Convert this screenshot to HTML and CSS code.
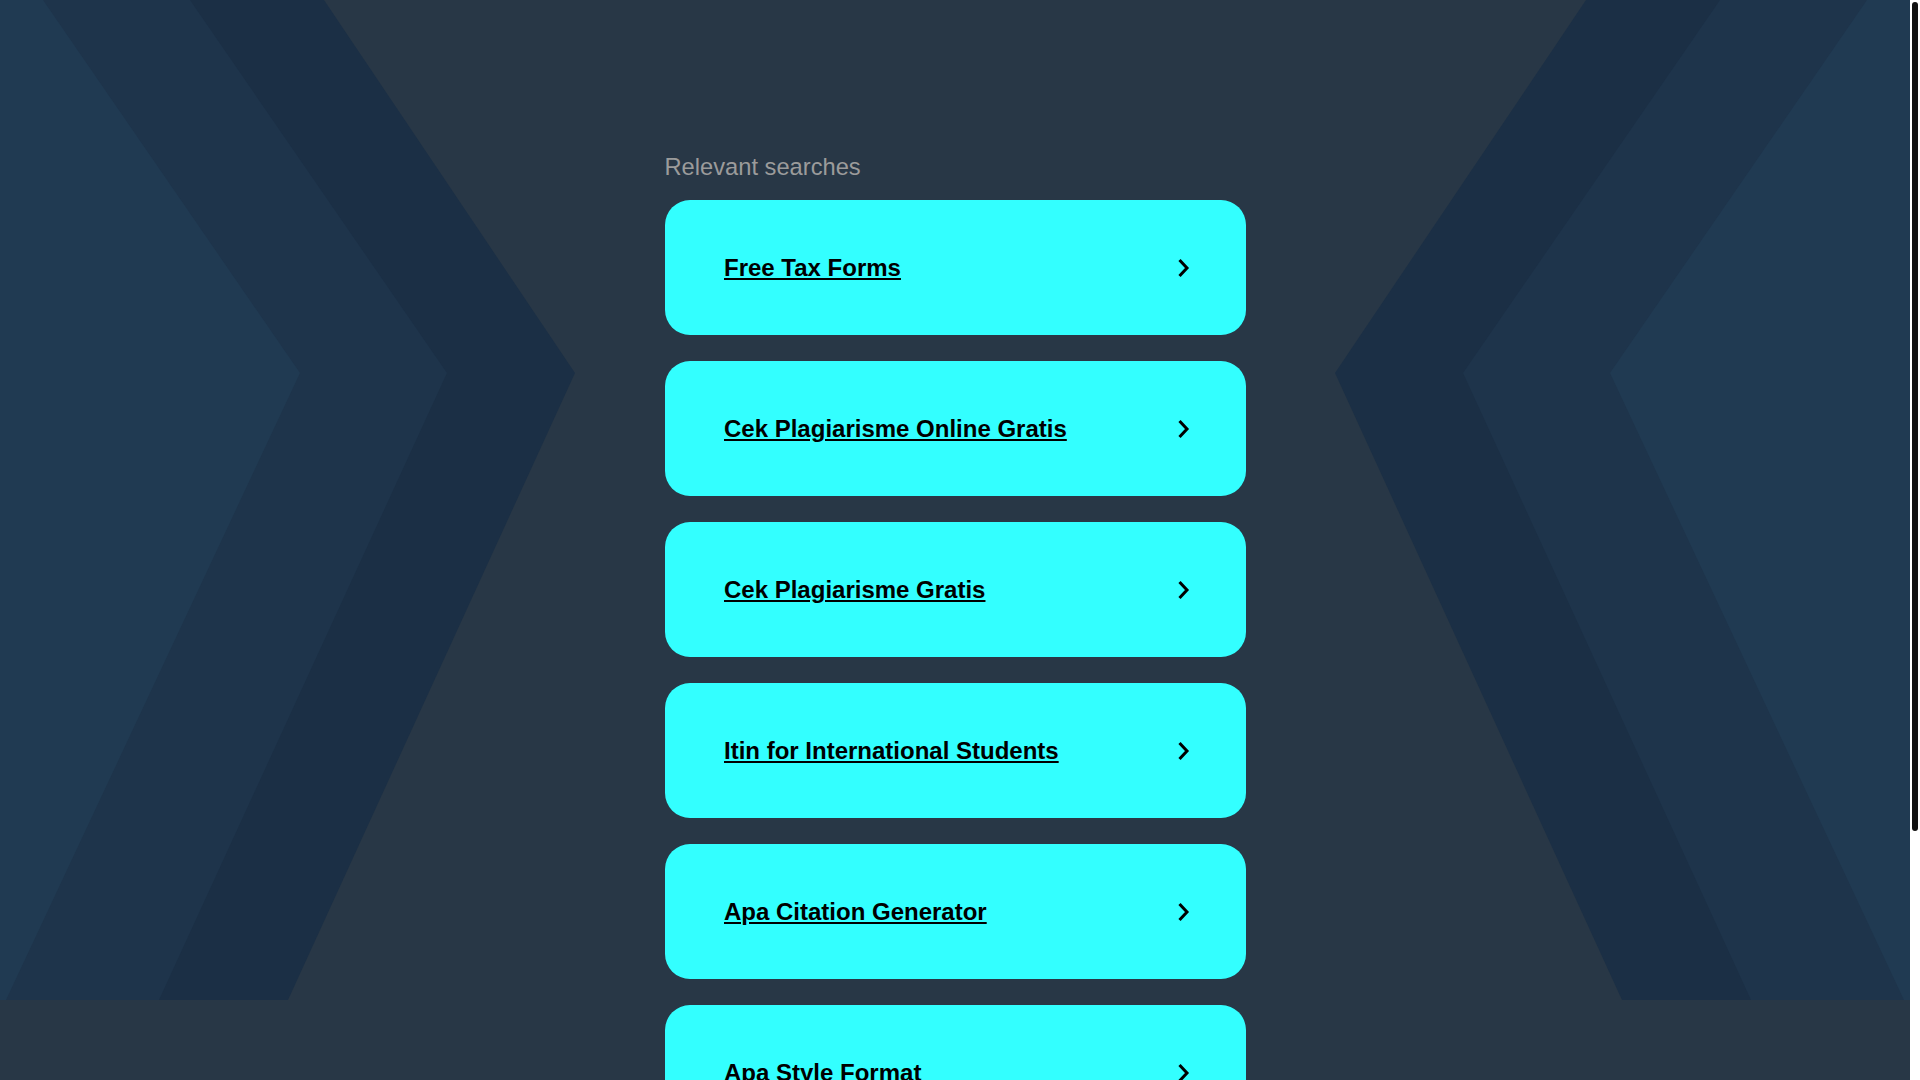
FILE: index.html
```html
<!DOCTYPE html>
<html lang="en">
<head>
<meta charset="utf-8">
<title>Relevant searches</title>
<link rel="stylesheet" href="styles.css">
</head>
<body>
<div class="backdrop" aria-hidden="true">
  <svg class="backdrop-svg" viewBox="0 0 1910 1000" preserveAspectRatio="none">
    <polygon points="0,0 324,0 575,373 288,1000 0,1000" fill="#1b2f45"/>
    <polygon points="0,0 190,0 447,373 159,1000 0,1000" fill="#1e344b"/>
    <polygon points="0,0 43,0 300,373 6,1000 0,1000" fill="#203a52"/>
    <polygon points="1910,0 1586,0 1335,373 1622,1000 1910,1000" fill="#1b2f45"/>
    <polygon points="1910,0 1720,0 1463,373 1751,1000 1910,1000" fill="#1e344b"/>
    <polygon points="1910,0 1867,0 1610,373 1904,1000 1910,1000" fill="#203a52"/>
  </svg>
</div>
<main class="content">
  <h2 class="heading">Relevant searches</h2>
  <ul class="results">
    <li class="card"><a class="card-link" href="#">Free Tax Forms</a><svg class="chev" viewBox="0 0 16 24"><polyline points="4.5,4 12,12 4.5,20"/></svg></li>
    <li class="card"><a class="card-link" href="#">Cek Plagiarisme Online Gratis</a><svg class="chev" viewBox="0 0 16 24"><polyline points="4.5,4 12,12 4.5,20"/></svg></li>
    <li class="card"><a class="card-link" href="#">Cek Plagiarisme Gratis</a><svg class="chev" viewBox="0 0 16 24"><polyline points="4.5,4 12,12 4.5,20"/></svg></li>
    <li class="card"><a class="card-link" href="#">Itin for International Students</a><svg class="chev" viewBox="0 0 16 24"><polyline points="4.5,4 12,12 4.5,20"/></svg></li>
    <li class="card"><a class="card-link" href="#">Apa Citation Generator</a><svg class="chev" viewBox="0 0 16 24"><polyline points="4.5,4 12,12 4.5,20"/></svg></li>
    <li class="card"><a class="card-link" href="#">Apa Style Format</a><svg class="chev" viewBox="0 0 16 24"><polyline points="4.5,4 12,12 4.5,20"/></svg></li>
  </ul>
</main>
<div class="scrollbar" aria-hidden="true"><div class="scrollbar-thumb"></div></div>
</body>
</html>
```
FILE: styles.css
```css
html {
  background: #283746;
}
body {
  margin: 0 10px 0 0;
  background: #283746;
  font-family: "Liberation Sans", Arial, sans-serif;
  position: relative;
}
.backdrop {
  position: absolute;
  top: 0;
  left: 0;
  right: 0;
  height: 1000px;
  z-index: 0;
}
.backdrop-svg {
  display: block;
  width: 100%;
  height: 100%;
}
.content {
  position: relative;
  z-index: 1;
  width: 581px;
  margin: 0 auto;
  padding: 154.4px 0 241px;
}
.heading {
  margin: 0 0 18.6px;
  font-size: 23.7px;
  line-height: 27px;
  font-weight: normal;
  color: #9b9b9b;
}
.results {
  list-style: none;
  margin: 0;
  padding: 0;
}
.card {
  display: flex;
  align-items: center;
  justify-content: space-between;
  height: 135.5px;
  margin-bottom: 25.5px;
  padding: 1px 54.5px 0 59.5px;
  box-sizing: border-box;
  background: #33ffff;
  border-radius: 25px;
}
.card-link {
  color: #000000;
  font-size: 24px;
  font-weight: bold;
  text-decoration: underline;
}
.chev {
  width: 16px;
  height: 24px;
  flex: none;
  fill: none;
  stroke: #000000;
  stroke-width: 3;
}
.scrollbar {
  position: fixed;
  top: 0;
  right: 0;
  width: 10px;
  height: 100vh;
  background: #ffffff;
  z-index: 5;
  padding: 2px 2px 0;
  box-sizing: border-box;
}
.scrollbar-thumb {
  height: 829px;
  background: #111111;
  border-radius: 3px;
}
```
